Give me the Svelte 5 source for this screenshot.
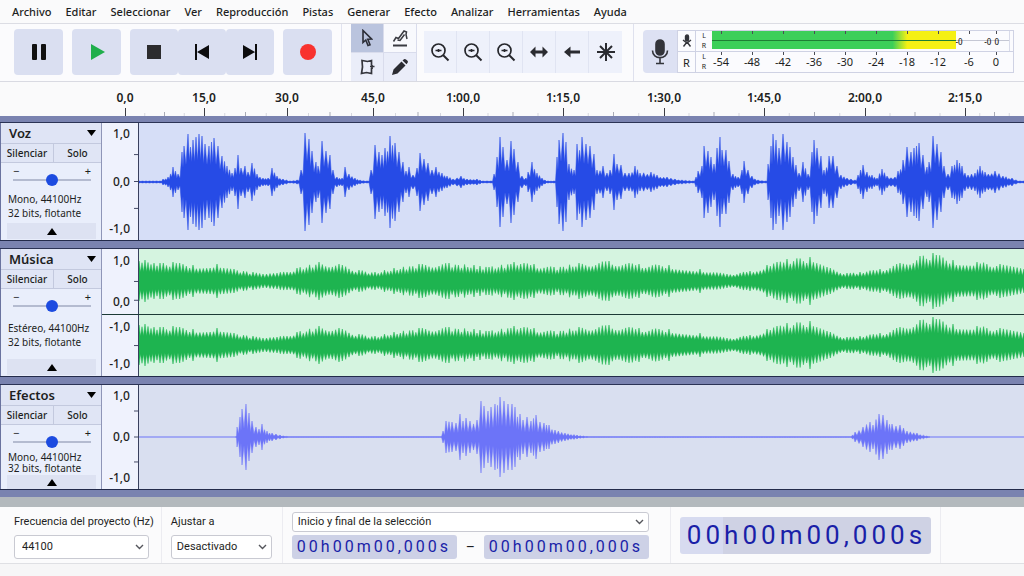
<script lang="ts">
	type Point = [number, number];

	interface Channel {
		labels: string[];
		ticks: number[];
		wave: string;
	}

	interface Track {
		id: string;
		name: string;
		format: string;
		channels: Channel[];
	}

	const LANE_WIDTH = 885;

	const menus = ['Archivo', 'Editar', 'Seleccionar', 'Ver', 'Reproducción', 'Pistas', 'Generar', 'Efecto', 'Analizar', 'Herramientas', 'Ayuda'];

	const ruler = [
		{ label: '0,0', span: 79 },
		{ label: '15,0', span: 83 },
		{ label: '30,0', span: 86 },
		{ label: '45,0', span: 90 },
		{ label: '1:00,0', span: 100 },
		{ label: '1:15,0', span: 101 },
		{ label: '1:30,0', span: 100 },
		{ label: '1:45,0', span: 101 },
		{ label: '2:00,0', span: 100 },
		{ label: '2:15,0', span: 59 },
	];

	const levels = ['-54', '-48', '-42', '-36', '-30', '-24', '-18', '-12', '-6', '0'];

	// peaks as [x, amplitude]
	const voice: Point[] = [
		[0, 1], [21, 1], [24, 3], [29, 5], [34, 15], [39, 8], [43, 30], [45, 36], [49, 48], [54, 42], [60, 48], [63, 46],
		[66, 38], [70, 36], [75, 44], [79, 36], [83, 26], [88, 16], [93, 9], [96, 14], [99, 27], [102, 14], [106, 16],
		[109, 10], [113, 19], [118, 8], [124, 4], [129, 4], [133, 14], [138, 6], [144, 3], [151, 1], [158, 2], [162, 12],
		[166, 49], [170, 43], [173, 31], [177, 20], [179, 16], [183, 41], [187, 31], [191, 27], [194, 12], [198, 5],
		[203, 4], [206, 15], [210, 8], [216, 4], [221, 2], [228, 1], [232, 12], [236, 37], [240, 30], [243, 27], [246, 34],
		[251, 46], [256, 39], [260, 30], [264, 20], [267, 11], [270, 15], [274, 7], [278, 14], [281, 29], [285, 23],
		[289, 19], [293, 12], [297, 15], [303, 9], [308, 6], [314, 3], [322, 6], [328, 3], [338, 3], [344, 1], [352, 1],
		[355, 8], [358, 25], [361, 45], [364, 35], [368, 22], [372, 41], [375, 33], [379, 20], [383, 6], [387, 4],
		[389, 10], [393, 20], [398, 9], [403, 4], [409, 1], [415, 1], [418, 25], [420, 42], [424, 49], [427, 40],
		[430, 18], [435, 12], [438, 38], [443, 45], [447, 38], [451, 36], [455, 28], [458, 12], [464, 16], [468, 9],
		[471, 12], [475, 28], [478, 18], [482, 17], [486, 9], [490, 9], [496, 16], [501, 9], [512, 10], [518, 7],
		[528, 5], [536, 3], [543, 2], [554, 1], [557, 5], [559, 11], [563, 16], [565, 36], [569, 31], [572, 25],
		[575, 18], [578, 34], [581, 45], [583, 32], [587, 32], [590, 21], [594, 8], [599, 5], [603, 12], [605, 21],
		[609, 12], [613, 6], [619, 2], [627, 1], [629, 18], [632, 36], [634, 48], [637, 42], [640, 34], [644, 48],
		[648, 40], [651, 35], [654, 25], [657, 17], [660, 9], [664, 20], [669, 8], [673, 30], [675, 42], [678, 34],
		[682, 26], [685, 12], [690, 26], [694, 26], [698, 16], [702, 7], [708, 4], [716, 2], [719, 7], [724, 17],
		[728, 10], [733, 7], [738, 4], [743, 13], [748, 6], [756, 5], [759, 11], [764, 22], [768, 35], [772, 30],
		[775, 34], [780, 39], [784, 27], [788, 15], [790, 20], [794, 46], [798, 38], [802, 30], [805, 16], [809, 8],
		[813, 16], [818, 22], [823, 16], [829, 7], [836, 9], [841, 16], [846, 10], [856, 11], [864, 6], [873, 4],
		[881, 1], [885, 1],
	];

	const music: Point[] = [
		[0, 20], [6, 21], [21, 18], [34, 19], [54, 16], [78, 17], [95, 12], [114, 9], [124, 7], [138, 8], [158, 13],
		[180, 19], [200, 17], [220, 11], [236, 9], [255, 13], [280, 17], [310, 18], [335, 16], [350, 14], [375, 19],
		[395, 17], [415, 14], [440, 18], [470, 20], [500, 17], [530, 16], [561, 12], [588, 7], [611, 10], [628, 16],
		[648, 22], [671, 24], [688, 14], [708, 8], [721, 9], [741, 12], [761, 18], [781, 25], [794, 28], [814, 21],
		[838, 19], [861, 17], [885, 12],
	];

	const effects: Point[] = [
		[97, 1], [98, 10], [101, 20], [103, 28], [107, 33], [110, 24], [113, 16], [117, 10], [120, 8], [123, 13],
		[128, 6], [133, 4], [141, 2], [151, 0], [301, 0], [304, 6], [307, 16], [313, 15], [317, 14], [321, 23],
		[324, 16], [327, 19], [331, 16], [338, 17], [342, 36], [345, 31], [349, 26], [352, 30], [356, 33],
		[361, 40], [365, 36], [369, 33], [373, 33], [376, 30], [381, 23], [384, 17], [388, 20], [392, 16], [397, 22],
		[401, 15], [405, 14], [410, 12], [416, 7], [426, 4], [438, 2], [451, 0], [711, 0], [716, 5], [724, 10],
		[731, 15], [734, 12], [740, 23], [744, 22], [748, 17], [753, 13], [761, 12], [768, 6], [778, 4], [791, 0],
	];

	// Mirrors the peaks round the zero line and fills long gaps with smaller spikes.
	function wavePath(peaks: Point[], valley: number): string {
		const tips: Point[] = [];
		for (let i = 0; i < peaks.length - 1; i++) {
			const [x0, a0] = peaks[i];
			const [x1, a1] = peaks[i + 1];
			const steps = Math.max(1, Math.round((x1 - x0) / 3.3));
			const gap = (x1 - x0) / steps;
			for (let s = 0; s < steps; s++) {
				const level = a0 + ((a1 - a0) * s) / steps;
				const next = a0 + ((a1 - a0) * (s + 1)) / steps;
				const x = x0 + s * gap;
				const jitter = s === 0 ? 1 : 0.88 + 0.12 * Math.sin(x * 7.3);
				tips.push([x, level * jitter]);
				tips.push([x + gap / 2, Math.min(level, next) * valley]);
			}
		}
		tips.push(peaks[peaks.length - 1]);
		const top = tips.map(([x, a]) => `${x.toFixed(1)} ${(-a).toFixed(1)}`);
		const bottom = tips.map(([x, a]) => `${x.toFixed(1)} ${a.toFixed(1)}`).reverse();
		return `M${top.join('L')}L${bottom.join('L')}Z`;
	}

	const voiceWave = wavePath(voice, 0.48);
	const musicWave = wavePath(music, 0.45);
	const effectsWave = wavePath(effects, 0.3);

	const tracks: Track[] = [
		{
			id: 'voz',
			name: 'Voz',
			format: 'Mono, 44100Hz',
			channels: [{ labels: ['1,0', '0,0', '-1,0'], ticks: [27, 50, 73], wave: voiceWave }],
		},
		{
			id: 'musica',
			name: 'Música',
			format: 'Estéreo, 44100Hz',
			channels: [
				{ labels: ['1,0', '0,0'], ticks: [50, 79], wave: musicWave },
				{ labels: ['-1,0', '-1,0'], ticks: [50], wave: musicWave },
			],
		},
		{
			id: 'efectos',
			name: 'Efectos',
			format: 'Mono, 44100Hz',
			channels: [{ labels: ['1,0', '0,0', '-1,0'], ticks: [25, 50, 74], wave: effectsWave }],
		},
	];

	const time = '00h00m00,000s';
	let tool = $state('select');
	let gains = $state([50, 50, 50]);
</script>

{#snippet magnifier()}
	<svg width="20" height="20" viewBox="0 0 20 20" fill="none" stroke="#26272c" stroke-width="1.7">
		<circle cx="8.5" cy="8.5" r="6.5" />
		<path d="M13 13l5.500 5.500" stroke-width="2" />
		<path d="M5.500 8.500h6M8.500 7v3" />
	</svg>
{/snippet}

{#snippet chevron()}
	<svg class="chevron" width="9" height="6" viewBox="0 0 9 6" fill="none" stroke="#55565c" stroke-width="1.400">
		<path d="M1 1l3.500 3.500L8 1" />
	</svg>
{/snippet}

{#snippet timer(label: string, size: string)}
	<div class="timer {size}" role="timer" aria-label={label}>
		{#each time as char}<span>{char}</span>{/each}
	</div>
{/snippet}

<div class="app">
	<nav class="menu">
		{#each menus as item}
			<button>{item}</button>
		{/each}
	</nav>

	<div class="toolbar">
		<div class="transport">
			<button aria-label="Pausa">
				<svg width="16" height="16" viewBox="0 0 16 16" fill="#111"><rect x="1" y="0" width="5" height="16" rx="1" /><rect x="10" y="0" width="5" height="16" rx="1" /></svg>
			</button>
			<button aria-label="Reproducir">
				<svg width="16" height="16" viewBox="0 0 16 16" fill="#1fae4b"><path d="M2 0l14 8L2 16z" /></svg>
			</button>
			<div class="joined">
				<button aria-label="Detener">
					<svg width="16" height="16" viewBox="0 0 16 16" fill="#2c2c2e"><rect x="1" y="1" width="14" height="14" /></svg>
				</button>
				<button aria-label="Ir al inicio">
					<svg width="16" height="16" viewBox="0 0 16 16" fill="#0c0c0e"><path d="M1 0h2v16H1zM15 1v14L3 8z" /></svg>
				</button>
				<button aria-label="Ir al final">
					<svg width="16" height="16" viewBox="0 0 16 16" fill="#0c0c0e"><path d="M13 0h2v16h-2zM1 1v14l12-7z" /></svg>
				</button>
			</div>
			<button aria-label="Grabar">
				<svg width="16" height="16" viewBox="0 0 16 16" fill="#f8322e"><circle cx="8" cy="8" r="8" /></svg>
			</button>
		</div>

		<div class="tools">
			<button class:active={tool === 'select'} onclick={() => (tool = 'select')} aria-label="Selección">
				<svg width="12" height="18" viewBox="0 0 12 18" fill="none" stroke="#2b2d36" stroke-width="1.600"><path d="M2 1.500v12l2.800-2.500 2.200 5.500 2-0.800-2.200-5.400 3.700-0.300z" /></svg>
			</button>
			<button class="plain" class:active={tool === 'envelope'} onclick={() => (tool = 'envelope')} aria-label="Envolvente">
				<svg width="18" height="18" viewBox="0 0 18 18" fill="none" stroke="#3a3b42" stroke-width="1.500"><path d="M2.500 12.500L5 8.500l2.500 1L13 2l2.500 1-.5 2.500 1 4.500" /><path d="M13.500 5.500L9 11.500l-2.500-.5" /><path d="M2 16.500h14" stroke-width="2" /></svg>
			</button>
			<button class:active={tool === 'draw'} onclick={() => (tool = 'draw')} aria-label="Recorte">
				<svg width="18" height="18" viewBox="0 0 18 18" fill="none" stroke="#34353c" stroke-width="1.700"><path d="M13.500 7.500V2.500L9.500 3.500 4 2.500 4.500 9 3.500 15.500l5-1 5 1V10" /><path d="M12 8.500h4.500M14 7v4" /></svg>
			</button>
			<button class:active={tool === 'pencil'} onclick={() => (tool = 'pencil')} aria-label="Lápiz">
				<svg width="18" height="18" viewBox="0 0 18 18" fill="#2b2c32"><path d="M1 17l1.500-5.500L10.500 3.500l4 4-8 8zM11.500 2.500L13 1.200q1-.7 2 .2l1.500 1.400q.9 1 .1 2L15.500 6.200z" /></svg>
			</button>
		</div>

		<div class="zoom">
			<button aria-label="Acercar">{@render magnifier()}</button>
			<button aria-label="Alejar">{@render magnifier()}</button>
			<button aria-label="Ampliar selección">{@render magnifier()}</button>
			<button aria-label="Ajustar al ancho">
				<svg width="18" height="12" viewBox="0 0 18 12" fill="#2a2b30"><path d="M0 6l5.500-5.500v4h7v-4L18 6l-5.500 5.500v-4h-7v4z" /></svg>
			</button>
			<button aria-label="Deshacer">
				<svg width="18" height="12" viewBox="0 0 18 12" fill="#2a2b30"><path d="M1 6l6.500-5.500v4H17v3H7.500v4z" /></svg>
			</button>
			<button aria-label="Multiherramienta">
				<svg width="20" height="20" viewBox="0 0 20 20" stroke="#2a2b30" stroke-width="2"><path d="M10 1v18M1 10h18M4 4l12 12M16 4L4 16" /></svg>
			</button>
		</div>

		<div class="meter">
			<button class="mic" aria-label="Micrófono">
				<svg width="18" height="26" viewBox="0 0 18 26" fill="none" stroke="#33343a" stroke-width="1.600"><rect x="5" y="1" width="8" height="15" rx="4" fill="#33343a" /><path d="M1.500 11.500c0 9.500 15 9.500 15 0M9 19v5M5 24.500h8" /></svg>
			</button>
			<div class="levels">
				<div class="level-row">
					<span class="kind">
						<svg width="10" height="14" viewBox="0 0 10 14" fill="none" stroke="#33343a" stroke-width="1.400"><rect x="3.500" y="1" width="3" height="6" rx="1.500" fill="#33343a" /><path d="M1 6l4 3 4-3M5 8L1.500 12.500M5 8l3.500 4.500" /></svg>
					</span>
					<span class="sides"><i>L</i><i>R</i></span>
					<div class="bar">
						<div class="fill"></div>
						<div class="marks">{#each levels as level (level)}<span></span>{/each}</div>
						<div class="clips"><b>-0</b><b>-0</b><b>0</b></div>
					</div>
				</div>
				<div class="level-row">
					<span class="kind">R</span>
					<span class="sides"><i>L</i><i>R</i></span>
					<div class="marks numbers">{#each levels as level (level)}<span>{level}</span>{/each}</div>
				</div>
			</div>
		</div>
	</div>

	<div class="ruler">
		{#each ruler as mark}
			<div class="segment" style="flex-grow: {mark.span}">
				<span>{mark.label}</span>
				<svg width="100%" height="8">
					<path d="M.5 0v8" stroke="#3c3d44" />
					<line x1="25%" x2="25%" y1="5" y2="8" stroke="#d6d7de" />
					<line x1="50%" x2="50%" y1="4" y2="8" stroke="#a9abb5" />
					<line x1="75%" x2="75%" y1="5" y2="8" stroke="#d6d7de" />
				</svg>
			</div>
		{/each}
	</div>

	<main class="tracks">
		{#each tracks as track, i (track.id)}
			<section class="track {track.id}">
				<div class="panel">
					<button class="name">
						{track.name}
						<svg width="9" height="6" viewBox="0 0 9 6"><path d="M0 0h9L4.500 6z" /></svg>
					</button>
					<div class="switches">
						<button>Silenciar</button>
						<button>Solo</button>
					</div>
					<div class="gain">
						<div class="signs"><span>−</span><span>+</span></div>
						<input type="range" min="0" max="100" bind:value={gains[i]} aria-label="Ganancia de {track.name}" />
					</div>
					<div class="format">
						<span>{track.format}</span>
						<span>32 bits, flotante</span>
					</div>
					<button class="collapse" aria-label="Contraer {track.name}">
						<svg width="10" height="7" viewBox="0 0 10 7"><path d="M0 7h10L5 0z" /></svg>
					</button>
				</div>
				<div class="channels">
					{#each track.channels as channel}
						<div class="channel">
							<div class="scale">
								{#each channel.labels as label}<span>{label}</span>{/each}
								<svg class="ticks" width="4" height="100%">
									{#each channel.ticks as y}<line x1="0" x2="4" y1="{y}%" y2="{y}%" />{/each}
								</svg>
							</div>
							<div class="lane">
								<svg viewBox="0 -50 {LANE_WIDTH} 100" preserveAspectRatio="none">
									<path d="M0 -.5H{LANE_WIDTH}V.5H0z" />
									<path class="wave" d={channel.wave} />
								</svg>
							</div>
						</div>
					{/each}
				</div>
			</section>
		{/each}
	</main>

	<div class="scroll"></div>

	<footer class="bottom">
		<div class="group rate">
			<label for="rate">Frecuencia del proyecto (Hz)</label>
			<div class="select">
				<select id="rate"><option>44100</option></select>
				{@render chevron()}
			</div>
		</div>
		<div class="group snap">
			<label for="snap">Ajustar a</label>
			<div class="select">
				<select id="snap"><option>Desactivado</option></select>
				{@render chevron()}
			</div>
		</div>
		<div class="group selection">
			<div class="select">
				<select aria-label="Selección"><option>Inicio y final de la selección</option></select>
				{@render chevron()}
			</div>
			<div class="range">
				{@render timer('Inicio', 'small')}
				<span class="dash">–</span>
				{@render timer('Final', 'small')}
			</div>
		</div>
		<div class="group position">
			{@render timer('Posición', 'large')}
		</div>
	</footer>
</div>

<style>
	:global(body) {
		background: #f6f6f7;
	}

	.app {
		font-family: 'Noto Sans', 'Open Sans', sans-serif;
		font-size: 11px;
		color: #1d1e22;
		overflow: hidden;
	}

	button {
		font: inherit;
		color: inherit;
		background: none;
		border: none;
		padding: 0;
		margin: 0;
		cursor: pointer;
	}

	svg {
		display: block;
	}

	.menu {
		display: flex;
		gap: 14px;
		height: 23px;
		padding: 0 12px;
		background: #fafafb;
		border-bottom: 1px solid #dcdde4;
	}

	.menu button {
		line-height: 24px;
		font-weight: 500;
		white-space: nowrap;
	}

	/* toolbar */
	.toolbar {
		display: flex;
		height: 57px;
		background: #fbfbfd;
		border-bottom: 1px solid #d9dae2;
	}

	.transport {
		display: flex;
		align-items: center;
		gap: 9px;
		padding: 0 9px 2px 14px;
		border-right: 1px solid #e1e3ef;
	}

	.transport button {
		display: flex;
		align-items: center;
		justify-content: center;
		width: 49px;
		height: 46px;
		background: #dadff1;
		border-radius: 4px;
	}

	.joined {
		display: flex;
	}

	.transport .joined button {
		width: 48px;
	}

	.tools {
		display: grid;
		grid-template-columns: 32px 32px;
		grid-template-rows: 28px 28px;
		gap: 1px;
		margin-left: 9px;
		background: #d9dcec;
		border-right: 1px solid #d9dcec;
	}

	.tools button {
		display: flex;
		align-items: center;
		justify-content: center;
		background: #eaedf9;
	}

	.tools .plain {
		background: #f8f9fd;
	}

	.tools .active {
		background: #bac4de;
	}

	.zoom {
		display: flex;
		align-items: center;
		padding: 0 11px 2px 7px;
		border-right: 1px solid #dfe1ee;
	}

	.zoom button {
		display: flex;
		align-items: center;
		justify-content: center;
		width: 33px;
		height: 42px;
		background: #eef1fb;
		border-right: 1px solid #e0e4f2;
	}

	.zoom button:last-child {
		border-right: none;
	}

	.meter {
		display: flex;
		flex: 1;
		align-items: center;
		padding: 0 10px 2px 9px;
	}

	.mic {
		display: flex;
		align-items: center;
		justify-content: center;
		width: 34px;
		height: 43px;
		background: #dde1f3;
		border-radius: 4px 0 0 4px;
	}

	.levels {
		flex: 1;
		border: 1px solid #cfd2e4;
		background: #fbfbfe;
	}

	.level-row {
		display: flex;
		height: 20px;
	}

	.level-row + .level-row {
		border-top: 1px solid #cfd2e4;
	}

	.kind {
		display: flex;
		align-items: center;
		justify-content: center;
		width: 17px;
		border-right: 1px solid #cfd2e4;
	}

	.sides {
		display: flex;
		flex-direction: column;
		align-items: center;
		justify-content: center;
		width: 16px;
		font-size: 7px;
		line-height: 10px;
	}

	.sides i {
		font-style: normal;
	}

	.bar {
		position: relative;
		display: flex;
		flex: 1;
		margin-right: 3px;
		border-right: 1px solid #d9dbea;
		background: linear-gradient(#c5c7d4, #c5c7d4) 0 9px / 100% 1px no-repeat;
	}

	.fill {
		width: 82%;
		height: 18px;
		background:
			linear-gradient(#1f7f35, #1f7f35) 0 9px / 100% 1px no-repeat,
			linear-gradient(90deg, #3ccf59 74%, #f5f014 80%);
	}

	.clips {
		display: flex;
		flex: 1;
		align-items: center;
		gap: 3px;
		padding-right: 10px;
		font-size: 8px;
	}

	.clips b {
		font-weight: 500;
	}

	.clips b:first-child {
		margin-right: auto;
	}

	.marks {
		display: flex;
		flex: 1;
		justify-content: space-between;
		line-height: 20px;
	}

	.bar .marks {
		position: absolute;
		inset: 0 5px 0 0;
	}

	.numbers {
		padding-right: 9px;
		margin-left: -3px;
	}

	.marks span {
		width: 24px;
		text-align: center;
		background: linear-gradient(#4a4c55, #4a4c55) 50% 0 / 1px 3px no-repeat;
	}

	.bar .marks span:first-child {
		margin-left: -3px;
	}

	.marks span:last-child {
		width: 16px;
	}

	/* ruler */
	.ruler {
		display: flex;
		height: 34px;
		padding-left: 125px;
		background: #fafafb;
	}

	.segment {
		display: flex;
		flex: 1 1 0;
		flex-direction: column;
		align-items: flex-start;
		justify-content: space-between;
		min-width: 0;
	}

	.segment span {
		transform: translateX(-50%);
		padding-top: 8px;
		font-size: 12px;
		line-height: 16px;
		font-weight: 600;
	}

	/* tracks */
	.tracks {
		display: flex;
		flex-direction: column;
		gap: 7px;
		padding: 6px 0 7px;
		background: #7a83b0;
	}

	.track {
		display: flex;
		height: 117px;
		border-top: 1px solid #2b3355;
		border-bottom: 1px solid #232b4b;
	}

	.track.musica {
		height: 127px;
	}

	.track.efectos {
		height: 104px;
	}

	.panel {
		display: flex;
		flex-direction: column;
		width: 100px;
		border-left: 1px solid #6a739f;
		border-right: 1px solid #8f96b8;
		background: #e9eefb;
	}

	.name {
		display: flex;
		align-items: center;
		justify-content: space-between;
		height: 20px;
		padding: 0 5px 0 8px;
		font-size: 13px;
		font-weight: 600;
		background: #dfe4f5;
	}

	.switches {
		display: grid;
		grid-template-columns: 52px 1fr;
		height: 18px;
		border-top: 1px solid #c3c9de;
		border-bottom: 1px solid #c3c9de;
		background: #e0e5f5;
		font-size: 10px;
		font-weight: 500;
	}

	.switches button + button {
		border-left: 1px solid #c3c9de;
	}

	.gain {
		height: 26px;
		padding: 0 10px 0 12px;
	}

	.signs {
		display: flex;
		justify-content: space-between;
		padding-top: 5px;
		line-height: 6px;
	}

	.gain input {
		appearance: none;
		display: block;
		width: 100%;
		height: 12px;
		margin: 0;
		background: linear-gradient(#b4bbd0, #b4bbd0) 0 50% / 100% 2px no-repeat;
	}

	.gain input::-webkit-slider-thumb {
		appearance: none;
		width: 12px;
		height: 12px;
		border-radius: 50%;
		background: #1c4be0;
	}

	.format {
		display: flex;
		flex-direction: column;
		flex: 1;
		justify-content: center;
		padding-left: 7px;
		font-size: 10px;
		line-height: 14px;
		white-space: nowrap;
	}

	.collapse {
		display: flex;
		align-items: center;
		justify-content: center;
		height: 16px;
		margin: 0 5px 1px 6px;
		background: #dde2f2;
	}

	.musica .format {
		padding-bottom: 4px;
	}

	.efectos .format {
		line-height: 11px;
	}

	.efectos .collapse {
		height: 14px;
		margin-bottom: 0;
	}

	.channels {
		display: flex;
		flex: 1;
		flex-direction: column;
		min-width: 0;
	}

	.channel {
		display: flex;
		flex: 16 1 0;
		min-height: 0;
	}

	.musica .channel:first-child {
		flex-grow: 17;
	}

	.channel + .channel {
		border-top: 1px solid #1c3a36;
	}

	.scale {
		position: relative;
		display: flex;
		flex-direction: column;
		justify-content: space-between;
		width: 28px;
		padding: 3px 8px 3px 0;
		border-right: 1px solid #39405e;
		background: #eff2fd;
		font-size: 12px;
		line-height: 16px;
		font-weight: 500;
		text-align: right;
	}

	.musica .scale {
		padding: 4px 8px 4px 0;
	}

	.ticks {
		position: absolute;
		top: 0;
		right: 0;
		stroke: #444a66;
	}

	.lane {
		display: flex;
		flex: 1;
		align-items: center;
		min-width: 0;
		background: #d6def7;
	}

	.lane svg {
		flex: none;
		width: 100%;
		height: 100px;
		margin: -20px 0;
		fill: #264be6;
	}

	.wave {
		stroke: #264be6;
		stroke-width: 0.5;
		stroke-linejoin: bevel;
	}

	.musica .lane {
		background: #d5f4e0;
	}

	.musica .lane svg {
		fill: #1eb450;
	}

	.musica .wave {
		stroke: #1eb450;
	}

	.efectos .lane {
		background: #d9dff0;
	}

	.efectos .lane svg {
		fill: #6c74f8;
	}

	.efectos .wave {
		stroke: #6c74f8;
	}

	.scroll {
		height: 10px;
		background: #b3b9bd;
	}

	/* bottom bar */
	.bottom {
		display: flex;
		height: 56px;
		background: #fbfbfc;
		border-bottom: 1px solid #dfe0e4;
		font-family: Roboto, 'Noto Sans', sans-serif;
	}

	.group {
		display: flex;
		flex-direction: column;
		justify-content: center;
		gap: 3px;
		border-right: 1px solid #ececf1;
	}

	.group label {
		line-height: 20px;
		white-space: nowrap;
	}

	.rate {
		padding: 0 7px 0 14px;
	}

	.rate .select {
		width: 135px;
	}

	.snap {
		padding: 0 10px 0 9px;
	}

	.snap .select {
		width: 101px;
	}

	.selection {
		padding: 0 21px 0 9px;
	}

	.position {
		padding: 0 9px;
	}

	.select {
		position: relative;
	}

	select {
		appearance: none;
		display: block;
		width: 100%;
		height: 24px;
		padding: 0 20px 0 7px;
		border: 1px solid #c9cad2;
		border-radius: 3px;
		background: #fff;
		font: inherit;
		color: inherit;
	}

	.snap select {
		padding-left: 5px;
	}

	.selection select {
		height: 20px;
		padding-left: 5px;
	}

	.chevron {
		position: absolute;
		top: 50%;
		right: 5px;
		margin-top: -3px;
		pointer-events: none;
	}

	.range {
		display: flex;
		align-items: center;
		justify-content: space-between;
	}

	.dash {
		width: 27px;
		text-align: center;
		font-size: 14px;
		line-height: 16px;
	}

	.timer {
		display: flex;
		align-items: center;
		border-radius: 3px;
		background: #cdd1e6;
		color: #1a1fa8;
	}

	.small {
		gap: 3px;
		width: 160px;
		height: 24px;
		padding-left: 5px;
		font-size: 16px;
	}

	.large {
		gap: 4px;
		width: 244px;
		height: 37px;
		padding-left: 7px;
		background: linear-gradient(90deg, #d7dbf0 43px, #cfd2e4 43px);
		font-size: 26px;
	}
</style>
